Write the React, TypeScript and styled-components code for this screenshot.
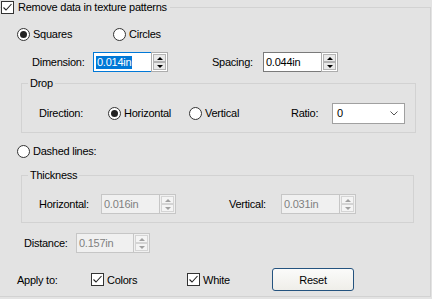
import React from 'react';
import styled, { createGlobalStyle } from 'styled-components';

const Global = createGlobalStyle`
  html, body { margin: 0; padding: 0; background: #e3e3e3; }
  body {
    font-family: "Liberation Sans", Arial, sans-serif;
    font-size: 11px;
    letter-spacing: -0.25px;
    color: #000;
  }
  * { box-sizing: border-box; }
`;

const Page = styled.div`
  width: 432px;
  height: 299px;
  overflow: hidden;
  background: #e3e3e3;
`;

const OuterGroup = styled.fieldset`
  margin: 0;
  padding: 0;
  width: 431px;
  min-inline-size: 0;
  border: 1px solid #d2d2d2;
  border-left: none;
`;

const OuterLegend = styled.legend`
  margin-left: 1px;
  padding: 0 3px 0 0;
  height: 14px;
  display: flex;
  align-items: center;
  gap: 4px;
  line-height: 14px;
`;

const Content = styled.div`
  display: flex;
  flex-direction: column;
  padding: 0 0 5px 17px;
`;

const Row = styled.div<{ $mt: number; $pl?: number; $h?: number }>`
  display: flex;
  align-items: center;
  height: ${p => p.$h ?? 20}px;
  margin-top: ${p => p.$mt}px;
  padding-left: ${p => p.$pl ?? 0}px;
`;

const Label = styled.span<{ $w?: number; $ml?: number }>`
  display: inline-block;
  width: ${p => (p.$w ? `${p.$w}px` : 'auto')};
  margin-left: ${p => p.$ml ?? 0}px;
  white-space: nowrap;
  line-height: 14px;
`;

const Group = styled.fieldset<{ $mt: number; $w: number }>`
  margin: ${p => p.$mt}px 0 0 4px;
  padding: 0;
  width: ${p => p.$w}px;
  min-inline-size: 0;
  border: 1px solid #d2d2d2;
`;

const GroupLegend = styled.legend`
  margin-left: 6px;
  padding: 0 2px;
  height: 14px;
  line-height: 14px;
`;

const GroupBody = styled.div<{ $pt: number; $pb: number }>`
  padding: ${p => p.$pt}px 0 ${p => p.$pb}px 17px;
  display: flex;
  flex-direction: column;
`;

const Option = styled.label<{ $w?: number }>`
  display: inline-flex;
  align-items: center;
  gap: 3px;
  width: ${p => (p.$w ? `${p.$w}px` : 'auto')};
  white-space: nowrap;
  line-height: 14px;
`;

const RadioCircle = styled.span<{ $on?: boolean }>`
  width: 13px;
  height: 13px;
  border-radius: 50%;
  border: 1px solid #333;
  background: #fff;
  display: inline-flex;
  align-items: center;
  justify-content: center;
  flex: none;
  &::after {
    content: '';
    width: 7px;
    height: 7px;
    border-radius: 50%;
    background: #222;
    display: ${p => (p.$on ? 'block' : 'none')};
  }
`;

const CheckBoxBox = styled.span`
  width: 13px;
  height: 13px;
  border: 1px solid #333;
  background: #fff;
  display: inline-flex;
  align-items: center;
  justify-content: center;
  flex: none;
`;

const Radio: React.FC<{ on?: boolean; label: string; w?: number }> = ({ on, label, w }) => (
  <Option $w={w}>
    <RadioCircle $on={on} />
    <span>{label}</span>
  </Option>
);

const Check: React.FC = () => (
  <CheckBoxBox>
    <svg width="11" height="11" viewBox="0 0 11 11">
      <polyline points="1.5,5.5 4,8 9.5,2" fill="none" stroke="#222" strokeWidth="1.1" />
    </svg>
  </CheckBoxBox>
);

const Spin = styled.div<{ $w?: number }>`
  display: inline-flex;
  width: ${p => p.$w ?? 75}px;
  height: 20px;
  flex: none;
`;

const Field = styled.div<{ $focus?: boolean; $disabled?: boolean }>`
  flex: 1;
  height: 100%;
  border: 1px solid ${p => (p.$focus ? '#0078d7' : p.$disabled ? '#c6c6c6' : '#7a7a7a')};
  border-right: none;
  background: ${p => (p.$disabled ? '#f0f0f0' : '#fff')};
  color: ${p => (p.$disabled ? '#808080' : '#000')};
  display: flex;
  align-items: center;
  padding-left: 2px;
  line-height: 13px;
`;

const Selected = styled.span`
  background: #0078d7;
  color: #fff;
  padding: 0 1px;
`;

const SpinCol = styled.div<{ $disabled?: boolean }>`
  width: 17px;
  height: 100%;
  border: 1px solid ${p => (p.$disabled ? '#c6c6c6' : '#acacac')};
  background: ${p => (p.$disabled ? '#f0f0f0' : '#fff')};
  padding: 1px;
  display: flex;
  flex-direction: column;
  gap: 0px;
`;

const SpinBtn = styled.div<{ $down?: boolean; $disabled?: boolean }>`
  flex: 1;
  border: 1px solid ${p => (p.$disabled ? '#d4d4d4' : '#b4b4b4')};
  background: ${p => (p.$disabled ? '#f4f4f4' : '#e9e9e9')};
  display: flex;
  align-items: center;
  justify-content: center;
  &::after {
    content: '';
    width: 0;
    height: 0;
    border-left: 3px solid transparent;
    border-right: 3px solid transparent;
    ${p =>
      p.$down
        ? `border-top: 3px solid ${p.$disabled ? '#a0a0a0' : '#000'};`
        : `border-bottom: 3px solid ${p.$disabled ? '#a0a0a0' : '#000'};`}
  }
`;

const SpinBox: React.FC<{ value: string; focus?: boolean; disabled?: boolean; w?: number }> = ({
  value,
  focus,
  disabled,
  w,
}) => (
  <Spin $w={w}>
    <Field $focus={focus} $disabled={disabled}>
      {focus ? <Selected>{value}</Selected> : <span>{value}</span>}
    </Field>
    <SpinCol $disabled={disabled}>
      <SpinBtn $disabled={disabled} />
      <SpinBtn $down $disabled={disabled} />
    </SpinCol>
  </Spin>
);

const Combo = styled.div`
  width: 73px;
  height: 21px;
  border: 1px solid #a0a0a0;
  background: #fff;
  display: flex;
  align-items: center;
  justify-content: space-between;
  padding: 0 6px 0 4px;
  flex: none;
`;

const Button = styled.button`
  width: 82px;
  height: 23px;
  margin: 0;
  padding: 0;
  border: 1px solid #24537f;
  border-radius: 3px;
  background: linear-gradient(#fbfbfa, #efeee9);
  font-family: inherit;
  font-size: 11px;
  letter-spacing: -0.25px;
  color: #000;
  flex: none;
`;

export default function App() {
  return (
    <Page>
      <Global />
      <OuterGroup>
        <OuterLegend>
          <Check />
          <span>Remove data in texture patterns</span>
        </OuterLegend>
        <Content>
          <Row $mt={10}>
            <Radio on label="Squares" w={96} />
            <Radio label="Circles" />
          </Row>
          <Row $mt={8} $pl={15}>
            <Label $w={61}>Dimension:</Label>
            <SpinBox value="0.014in" focus />
            <Label $w={51} $ml={44}>Spacing:</Label>
            <SpinBox value="0.044in" />
          </Row>
          <Group $mt={4} $w={395}>
            <GroupLegend>Drop</GroupLegend>
            <GroupBody $pt={13} $pb={9}>
              <Row $mt={0}>
                <Label $w={69}>Direction:</Label>
                <Radio on label="Horizontal" w={81} />
                <Radio label="Vertical" w={102} />
                <Label $w={41}>Ratio:</Label>
                <Combo>
                  <span>0</span>
                  <svg width="8" height="5" viewBox="0 0 8 5">
                    <polyline points="0.5,0.5 4,4 7.5,0.5" fill="none" stroke="#555" strokeWidth="1" />
                  </svg>
                </Combo>
              </Row>
            </GroupBody>
          </Group>
          <Row $mt={8}>
            <Radio label="Dashed lines:" />
          </Row>
          <Group $mt={7} $w={393}>
            <GroupLegend>Thickness</GroupLegend>
            <GroupBody $pt={12} $pb={8}>
              <Row $mt={0}>
                <Label $w={62}>Horizontal:</Label>
                <SpinBox value="0.016in" disabled />
                <Label $w={52} $ml={53}>Vertical:</Label>
                <SpinBox value="0.031in" disabled />
              </Row>
            </GroupBody>
          </Group>
          <Row $mt={10} $pl={7}>
            <Label $w={52}>Distance:</Label>
            <SpinBox value="0.157in" disabled w={74} />
          </Row>
          <Row $mt={15} $h={23}>
            <Label $w={74}>Apply to:</Label>
            <Option $w={96}>
              <Check />
              <span>Colors</span>
            </Option>
            <Option $w={85}>
              <Check />
              <span>White</span>
            </Option>
            <Button>Reset</Button>
          </Row>
        </Content>
      </OuterGroup>
    </Page>
  );
}
